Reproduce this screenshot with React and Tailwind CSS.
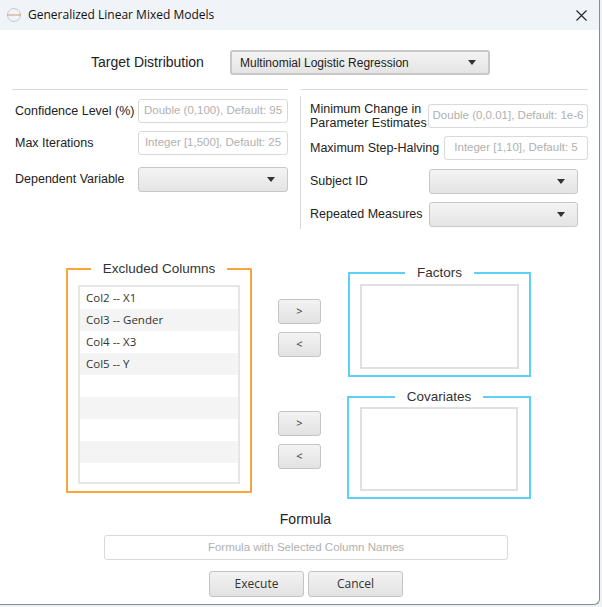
const Arrow = () => (
  <svg width="8" height="5" viewBox="0 0 8 5"><path d="M0 0H8L4 5Z" fill="#333" /></svg>
);
const Input = ({ w, ph, cls = "" }) => (
  <div className={`h-[24px] border border-[#d9d9d9] rounded-[3px] bg-white flex items-center justify-center text-[11.5px] text-[#b0b0b0] whitespace-nowrap overflow-hidden ${cls}`} style={{ width: w }}>{ph}</div>
);
const Combo = ({ w, cls = "", children }) => (
  <div className={`h-[25px] border border-[#c8c8c8] rounded-[3px] bg-gradient-to-b from-[#f4f4f4] to-[#e4e4e4] flex items-center justify-between pl-2 pr-3 ${cls}`} style={{ width: w }}>
    <span className="text-[12px] text-[#222]">{children}</span><Arrow />
  </div>
);
const Btn = ({ children, cls = "" }) => (
  <div className={`border border-[#c4c4c4] rounded-[3px] bg-gradient-to-b from-[#f3f3f3] to-[#e2e2e2] flex items-center justify-center text-[11px] text-[#333] ${cls}`} style={{ fontFamily: "'Open Sans',sans-serif" }}>{children}</div>
);
const Group = ({ title, color, cls, children }) => (
  <fieldset className={`border-2 ${cls}`} style={{ borderColor: color }}>
    <legend className="mx-auto px-3 text-[13.5px] text-[#333] leading-[14px]">{title}</legend>
    {children}
  </fieldset>
);

export default function App() {
  const rows = ["Col2 -- X1", "Col3 -- Gender", "Col4 -- X3", "Col5 -- Y", "", "", "", "", ""];
  const L = "text-[12.5px] text-[#222]";
  return (
    <div className="w-[602px] h-[607px] bg-[#eef2f7] relative" style={{ fontFamily: "'Liberation Sans',Arial,sans-serif" }}>
      <div className="w-[600px] h-[605px] bg-white border-r border-b border-[#8a8a8a] rounded-br-[6px] flex flex-col">
        <div className="h-[30px] flex items-center bg-[#f0f4f9] pl-[6px] pr-[12px]">
          <svg width="16" height="16" viewBox="0 0 16 16"><circle cx="8" cy="8" r="6.5" fill="none" stroke="#c8c8c8" /><path d="M1 8H15" stroke="#c8a070" /></svg>
          <span className="ml-[6px] text-[12px] text-[#111]" style={{ fontFamily: "'Open Sans',sans-serif" }}>Generalized Linear Mixed Models</span>
          <svg className="ml-auto" width="11" height="11" viewBox="0 0 11 11"><path d="M0.5 0.5L10.5 10.5M10.5 0.5L0.5 10.5" stroke="#222" strokeWidth="1.1" /></svg>
        </div>
        <div className="flex items-center mt-[20px] h-[25px]">
          <span className="w-[230px] text-center pl-[65px] text-[14px] text-[#222]">Target Distribution</span>
          <Combo w={260} cls="border-[#3aa6e0] border-2">Multinomial Logistic Regression</Combo>
        </div>
        <div className="flex mt-[14px]">
          <div className="w-[276px] ml-[12px] border-t border-[#d8d8d8] pt-[9px] pl-[3px]">
            <div className="flex items-center justify-between h-[24px]"><span className={L}>Confidence Level (%)</span><Input w={150} ph="Double (0,100), Default: 95" /></div>
            <div className="flex items-center justify-between h-[24px] mt-[8px]"><span className={L}>Max Iterations</span><Input w={150} ph="Integer [1,500], Default: 25" /></div>
            <div className="flex items-center justify-between h-[24px] mt-[12px]"><span className={L}>Dependent Variable</span><Combo w={150} /></div>
          </div>
          <div className="w-px bg-[#d8d8d8] ml-[12px] mt-[7px] h-[133px]" />
          <div className="w-[287px] border-t border-[#d8d8d8] pt-[13px] pl-[9px]">
            <div className="flex items-center justify-between h-[26px]"><span className={`${L} leading-[14px]`}>Minimum Change in<br />Parameter Estimates</span><Input w={160} ph="Double (0,0.01], Default: 1e-6" /></div>
            <div className="flex items-center justify-between h-[24px] mt-[7px]"><span className={L}>Maximum Step-Halving</span><Input w={144} ph="Integer [1,10], Default: 5" /></div>
            <div className="flex items-center h-[25px] mt-[9px]"><span className={`w-[119px] ${L}`}>Subject ID</span><Combo w={149} /></div>
            <div className="flex items-center h-[25px] mt-[8px]"><span className={`w-[119px] ${L}`}>Repeated Measures</span><Combo w={149} /></div>
          </div>
        </div>
        <div className="flex mt-[33px] h-[236px]">
          <Group title="Excluded Columns" color="#f9a53c" cls="ml-[66px] w-[186px] h-[231px] px-[10px] pb-[5px] rounded-[1px]">
            <div className="border-2 border-[#e6e6e6] h-[199px] mt-[9px] overflow-hidden">
              {rows.map((r, i) => (
                <div key={i} className={`h-[22px] flex items-center pl-[6px] text-[11.5px] text-[#333] ${i % 2 ? "bg-[#f4f4f4]" : "bg-white"}`} style={{ fontFamily: "'Open Sans',sans-serif" }}>{r}</div>
              ))}
            </div>
          </Group>
          <div className="ml-[26px] w-[43px] flex flex-col">
            <Btn cls="h-[25px] mt-[37px]">&gt;</Btn>
            <Btn cls="h-[25px] mt-[8px]">&lt;</Btn>
            <Btn cls="h-[25px] mt-[54px]">&gt;</Btn>
            <Btn cls="h-[25px] mt-[8px]">&lt;</Btn>
          </div>
          <div className="ml-[27px] flex flex-col">
            <Group title="Factors" color="#5fd0f5" cls="w-[183px] h-[112px] px-[10px] pb-[6px] mt-[4px]">
              <div className="border-2 border-[#e0e0e0] h-[85px] mt-[4px]" />
            </Group>
            <Group title="Covariates" color="#5fd0f5" cls="w-[184px] h-[109px] px-[11px] pb-[6px] mt-[13px] ml-[-1px]">
              <div className="border-2 border-[#e0e0e0] h-[84px] mt-[3px]" />
            </Group>
          </div>
        </div>
        <div className="text-center text-[14px] text-[#222] mt-[13px] leading-[16px] pl-[12px]">Formula</div>
        <div className="mt-[8px] ml-[104px]"><Input w={404} ph="Formula with Selected Column Names" cls="h-[25px]" /></div>
        <div className="flex gap-[4px] mt-[11px] ml-[209px]">
          <Btn cls="w-[95px] h-[26px] text-[12px]">Execute</Btn>
          <Btn cls="w-[95px] h-[26px] text-[12px]">Cancel</Btn>
        </div>
      </div>
    </div>
  );
}
